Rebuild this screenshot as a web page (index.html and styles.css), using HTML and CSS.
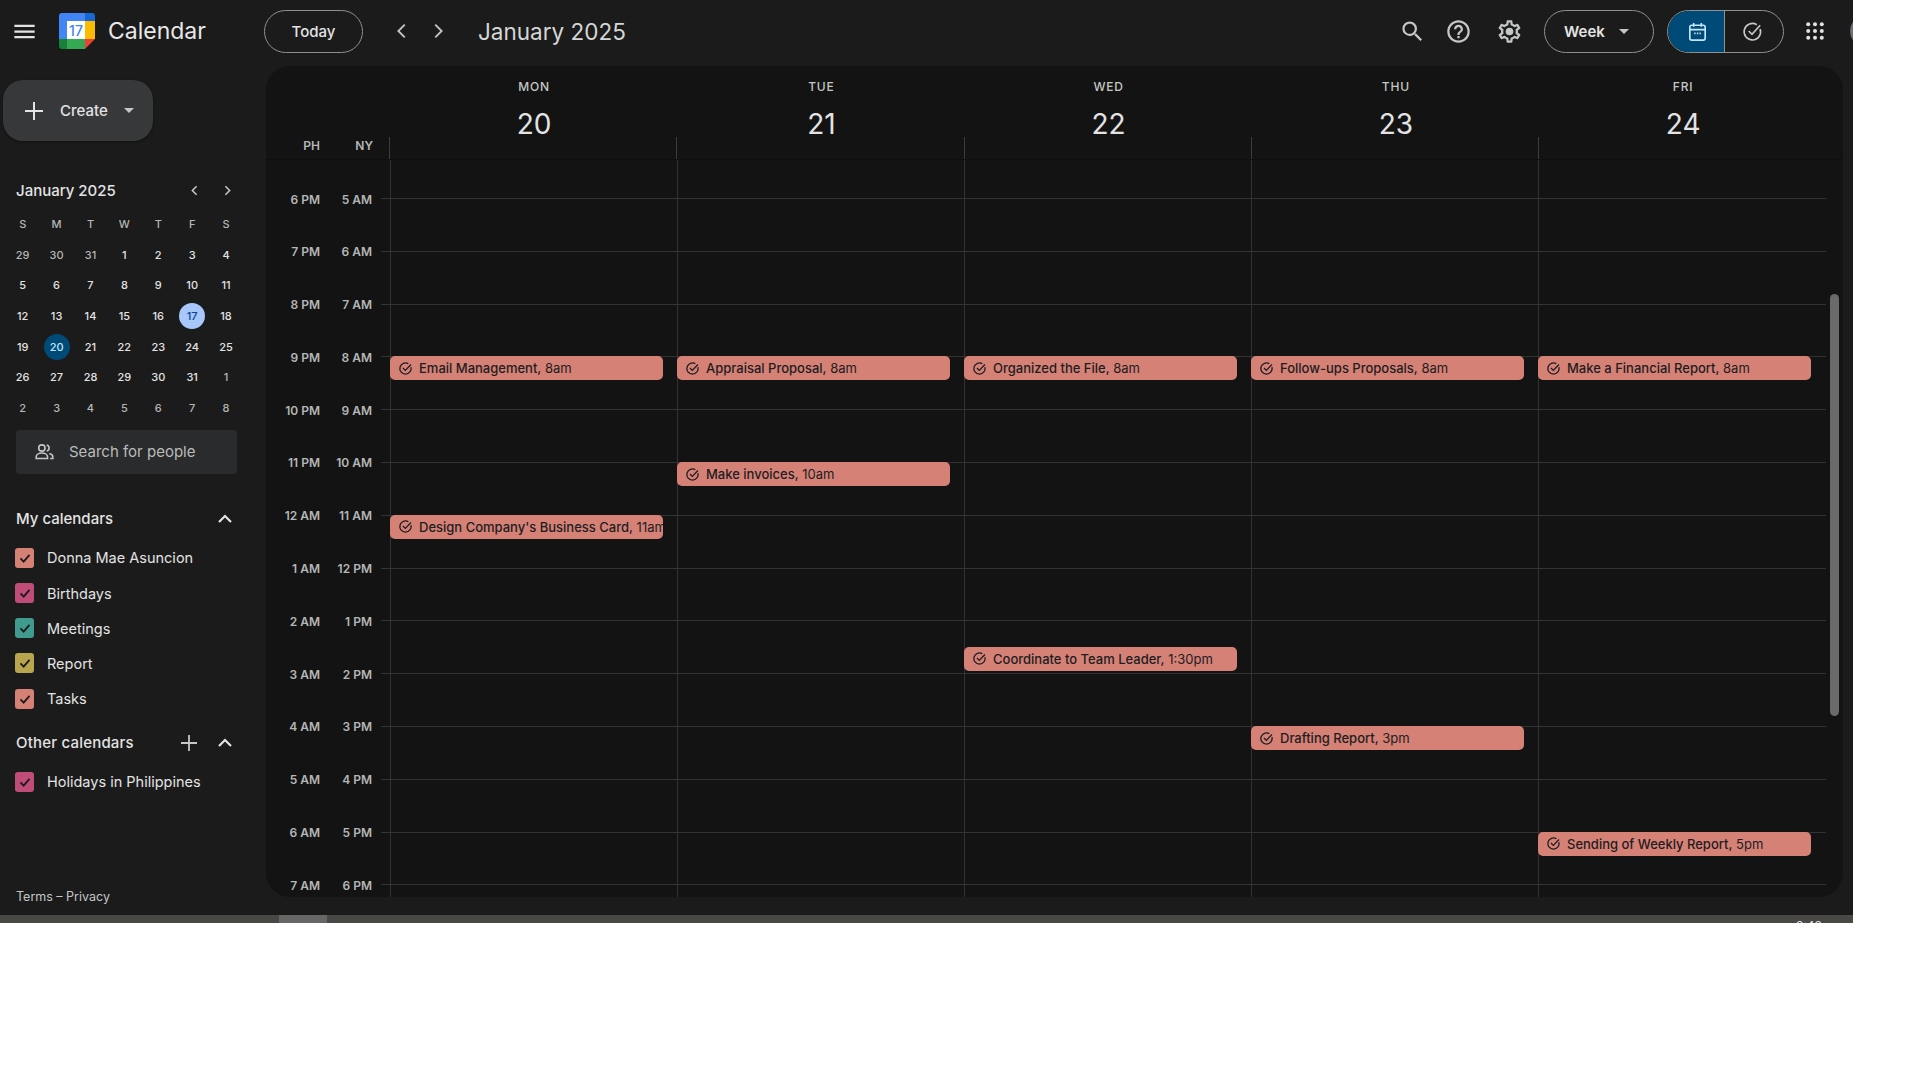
FILE: index.html
```html
<!DOCTYPE html>
<html lang="en">
<head>
    <meta charset="UTF-8">
    <title>Calendar - Week of January 20, 2025</title>
    <link rel="stylesheet" href="styles.css">
</head>
<body>
    <div class="app">
        <!-- Top bar -->
        <header class="topbar">
            <div class="brand">
                <svg class="icon-menu" viewBox="0 0 24 24"><path d="M3 18h18v-2H3v2zm0-5h18v-2H3v2zm0-7v2h18V6H3z"/></svg>
                <svg class="logo" viewBox="0 0 36 36">
                    <path fill="#4285f4" d="M3 0h23v8H8v18H0V3a3 3 0 0 1 3-3z"/>
                    <path fill="#1967d2" d="M26 0h7a3 3 0 0 1 3 3v5H26z"/>
                    <path fill="#fbbc04" d="M26 8h10v18H26z"/>
                    <path fill="#34a853" d="M8 26h18v10H8z"/>
                    <path fill="#188038" d="M0 26h8v10H3a3 3 0 0 1-3-3z"/>
                    <path fill="#ea4335" d="M26 26h10L26 36z"/>
                    <path fill="#fff" d="M8 8h18v18H8z"/>
                    <text class="logo-day" x="17" y="23">17</text>
                </svg>
                <span class="brand-name">Calendar</span>
            </div>
            <button class="pill today-btn">Today</button>
            <div class="period-nav">
                <svg class="chevron" viewBox="0 0 24 24"><polyline points="15,5 8,12 15,19"/></svg>
                <svg class="chevron" viewBox="0 0 24 24"><polyline points="9,5 16,12 9,19"/></svg>
            </div>
            <div class="period-title">January 2025</div>
            <div class="top-actions">
                <div class="top-icon">
                    <svg viewBox="0 0 24 24"><path d="M15.5 14h-.79l-.28-.27A6.47 6.47 0 0 0 16 9.5 6.5 6.5 0 1 0 9.5 16c1.61 0 3.09-.59 4.23-1.57l.27.28v.79l5 4.99L20.49 19l-4.99-5zm-6 0C7.01 14 5 11.99 5 9.5S7.01 5 9.5 5 14 7.01 14 9.5 11.99 14 9.5 14z"/></svg>
                </div>
                <div class="top-icon">
                    <svg viewBox="0 0 24 24"><path d="M11 18h2v-2h-2v2zm1-16C6.48 2 2 6.48 2 12s4.48 10 10 10 10-4.48 10-10S17.52 2 12 2zm0 18c-4.41 0-8-3.59-8-8s3.59-8 8-8 8 3.59 8 8-3.59 8-8 8zm0-14c-2.21 0-4 1.79-4 4h2c0-1.1.9-2 2-2s2 .9 2 2c0 2-3 1.75-3 5h2c0-2.25 3-2.5 3-5 0-2.21-1.79-4-4-4z"/></svg>
                </div>
                <div class="top-icon gear">
                    <svg viewBox="0 0 24 24"><path d="M19.43 12.98c.04-.32.07-.64.07-.98 0-.34-.03-.66-.07-.98l2.11-1.65c.19-.15.24-.42.12-.64l-2-3.46c-.09-.16-.26-.25-.44-.25-.06 0-.12.01-.17.03l-2.49 1c-.52-.4-1.08-.73-1.69-.98l-.38-2.65C14.46 2.18 14.25 2 14 2h-4c-.25 0-.46.18-.49.42l-.38 2.65c-.61.25-1.17.59-1.69.98l-2.49-1c-.06-.02-.12-.03-.18-.03-.17 0-.34.09-.43.25l-2 3.46c-.13.22-.07.49.12.64l2.11 1.65c-.04.32-.07.65-.07.98 0 .33.03.66.07.98l-2.11 1.65c-.19.15-.24.42-.12.64l2 3.46c.09.16.26.25.44.25.06 0 .12-.01.17-.03l2.49-1c.52.4 1.08.73 1.69.98l.38 2.65c.03.24.24.42.49.42h4c.25 0 .46-.18.49-.42l.38-2.65c.61-.25 1.17-.59 1.69-.98l2.49 1c.06.02.12.03.18.03.17 0 .34-.09.43-.25l2-3.46c.12-.22.07-.49-.12-.64l-2.11-1.65zm-1.98-1.71c.04.31.05.52.05.73 0 .21-.02.43-.05.73l-.14 1.13.89.7 1.08.84-.7 1.21-1.27-.51-1.04-.42-.9.68c-.43.32-.84.56-1.25.73l-1.06.43-.16 1.13-.2 1.35h-1.4l-.19-1.35-.16-1.13-1.06-.43c-.43-.18-.83-.41-1.23-.71l-.91-.7-1.06.43-1.27.51-.7-1.21 1.08-.84.89-.7-.14-1.13c-.03-.31-.05-.54-.05-.74s.02-.43.05-.73l.14-1.13-.89-.7-1.08-.84.7-1.21 1.27.51 1.04.42.9-.68c.43-.32.84-.56 1.25-.73l1.06-.43.16-1.13.2-1.35h1.39l.19 1.35.16 1.13 1.06.43c.43.18.83.41 1.23.71l.91.7 1.06-.43 1.27-.51.7 1.21-1.07.85-.89.7.14 1.13z"/><circle cx="12" cy="12" r="3.4"/></svg>
                </div>
                <button class="pill week-btn">Week <span class="caret"></span></button>
                <div class="view-toggle">
                    <div class="view-opt active">
                        <svg viewBox="0 0 24 24"><rect x="4" y="5.5" width="16" height="15.5" rx="2"/><path d="M4 10h16M8 3v4M16 3v4"/><path d="M8.5 14h1.5M11.3 14h1.5M14 14h1.500"/></svg>
                    </div>
                    <div class="view-opt">
                        <svg viewBox="0 0 24 24"><path d="M20 9.5A8.6 8.6 0 1 1 16.5 5"/><path d="M8 11.5l3.5 3.5L20 5.5"/></svg>
                    </div>
                </div>
                <svg class="apps-icon" viewBox="0 0 18 18">
                    <circle cx="2.2" cy="2.2" r="2"/><circle cx="9" cy="2.2" r="2"/><circle cx="15.8" cy="2.2" r="2"/>
                    <circle cx="2.2" cy="9" r="2"/><circle cx="9" cy="9" r="2"/><circle cx="15.8" cy="9" r="2"/>
                    <circle cx="2.2" cy="15.8" r="2"/><circle cx="9" cy="15.8" r="2"/><circle cx="15.8" cy="15.8" r="2"/>
                </svg>
                <div class="avatar"></div>
            </div>
        </header>

        <div class="main">
            <!-- Left side -->
            <aside class="sidebar">
                <button class="create-btn">
                    <svg viewBox="0 0 20 20"><path d="M10 1v18M1 10h18"/></svg>
                    <span>Create</span>
                    <span class="caret"></span>
                </button>

                <div class="side-section">
                    <div class="mini-head">
                        <span class="mini-title">January 2025</span>
                        <svg class="mini-arrow" viewBox="0 0 24 24"><polyline points="15,6 9,12 15,18"/></svg>
                        <svg class="mini-arrow" viewBox="0 0 24 24"><polyline points="9,6 15,12 9,18"/></svg>
                    </div>
                    <div class="mini-cal">
                        <span class="wd">S</span><span class="wd">M</span><span class="wd">T</span><span class="wd">W</span><span class="wd">T</span><span class="wd">F</span><span class="wd">S</span>
                        <span class="other">29</span><span class="other">30</span><span class="other">31</span><span>1</span><span>2</span><span>3</span><span>4</span>
                        <span>5</span><span>6</span><span>7</span><span>8</span><span>9</span><span>10</span><span>11</span>
                        <span>12</span><span>13</span><span>14</span><span>15</span><span>16</span><span><b class="today">17</b></span><span>18</span>
                        <span>19</span><span><b class="picked">20</b></span><span>21</span><span>22</span><span>23</span><span>24</span><span>25</span>
                        <span>26</span><span>27</span><span>28</span><span>29</span><span>30</span><span>31</span><span class="other">1</span>
                        <span class="other">2</span><span class="other">3</span><span class="other">4</span><span class="other">5</span><span class="other">6</span><span class="other">7</span><span class="other">8</span>
                    </div>

                    <div class="people-search">
                        <svg viewBox="0 0 24 24"><circle cx="9" cy="8" r="3.6"/><path d="M2.5 20v-2c0-2.6 3-4.2 6.5-4.2s6.5 1.6 6.5 4.2v2z"/><path d="M14.5 4.5a3.6 3.6 0 0 1 0 7M17.5 14.2c2.2.6 4 2 4 3.8v2h-3"/></svg>
                        <span>Search for people</span>
                    </div>

                    <div class="cal-head first">
                        <span>My calendars</span>
                        <svg class="head-icon" viewBox="0 0 24 24"><polyline points="6,15 12,9 18,15"/></svg>
                    </div>
                    <label class="cal-item"><span class="box salmon"><svg viewBox="0 0 20 20"><polyline points="5,10.5 8.5,14 15,6.5"/></svg></span>Donna Mae Asuncion</label>
                    <label class="cal-item"><span class="box berry"><svg viewBox="0 0 20 20"><polyline points="5,10.5 8.5,14 15,6.5"/></svg></span>Birthdays</label>
                    <label class="cal-item"><span class="box teal"><svg viewBox="0 0 20 20"><polyline points="5,10.5 8.5,14 15,6.5"/></svg></span>Meetings</label>
                    <label class="cal-item"><span class="box mustard"><svg viewBox="0 0 20 20"><polyline points="5,10.5 8.5,14 15,6.5"/></svg></span>Report</label>
                    <label class="cal-item"><span class="box salmon"><svg viewBox="0 0 20 20"><polyline points="5,10.5 8.5,14 15,6.5"/></svg></span>Tasks</label>

                    <div class="cal-head second">
                        <span>Other calendars</span>
                        <svg class="head-icon plus" viewBox="0 0 24 24"><path d="M12 4v16M4 12h16"/></svg>
                        <svg class="head-icon" viewBox="0 0 24 24"><polyline points="6,15 12,9 18,15"/></svg>
                    </div>
                    <label class="cal-item"><span class="box berry"><svg viewBox="0 0 20 20"><polyline points="5,10.5 8.5,14 15,6.5"/></svg></span>Holidays in Philippines</label>
                </div>

                <div class="terms">Terms – Privacy</div>
            </aside>

            <!-- Week grid -->
            <section class="panel">
                <div class="week-head">
                    <div class="zones"><span>PH</span><span>NY</span></div>
                    <div class="head-day"><span class="dow">MON</span><span class="dom">20</span></div>
                    <div class="head-day"><span class="dow">TUE</span><span class="dom">21</span></div>
                    <div class="head-day"><span class="dow">WED</span><span class="dom">22</span></div>
                    <div class="head-day"><span class="dow">THU</span><span class="dom">23</span></div>
                    <div class="head-day"><span class="dow">FRI</span><span class="dom">24</span></div>
                </div>
                <div class="week-body">
                    <div class="hour-row"><span class="t">6 PM</span><span class="t">5 AM</span><i></i></div>
                    <div class="hour-row"><span class="t">7 PM</span><span class="t">6 AM</span><i></i></div>
                    <div class="hour-row"><span class="t">8 PM</span><span class="t">7 AM</span><i></i></div>
                    <div class="hour-row"><span class="t">9 PM</span><span class="t">8 AM</span><i></i></div>
                    <div class="hour-row"><span class="t">10 PM</span><span class="t">9 AM</span><i></i></div>
                    <div class="hour-row"><span class="t">11 PM</span><span class="t">10 AM</span><i></i></div>
                    <div class="hour-row"><span class="t">12 AM</span><span class="t">11 AM</span><i></i></div>
                    <div class="hour-row"><span class="t">1 AM</span><span class="t">12 PM</span><i></i></div>
                    <div class="hour-row"><span class="t">2 AM</span><span class="t">1 PM</span><i></i></div>
                    <div class="hour-row"><span class="t">3 AM</span><span class="t">2 PM</span><i></i></div>
                    <div class="hour-row"><span class="t">4 AM</span><span class="t">3 PM</span><i></i></div>
                    <div class="hour-row"><span class="t">5 AM</span><span class="t">4 PM</span><i></i></div>
                    <div class="hour-row"><span class="t">6 AM</span><span class="t">5 PM</span><i></i></div>
                    <div class="hour-row"><span class="t">7 AM</span><span class="t">6 PM</span><i></i></div>

                    <div class="days">
                        <div class="day">
                            <div class="event" style="--h:3"><svg viewBox="0 0 16 16"><path d="M13.8 6.5A6 6 0 1 1 11 2.8"/><path d="M5.3 7.5l2.5 2.5 6-6.3"/></svg><span><b>Email Management,</b> 8am</span></div>
                            <div class="event" style="--h:6"><svg viewBox="0 0 16 16"><path d="M13.8 6.5A6 6 0 1 1 11 2.8"/><path d="M5.3 7.5l2.5 2.5 6-6.3"/></svg><span><b>Design Company's Business Card,</b> 11am</span></div>
                        </div>
                        <div class="day">
                            <div class="event" style="--h:3"><svg viewBox="0 0 16 16"><path d="M13.8 6.5A6 6 0 1 1 11 2.8"/><path d="M5.3 7.5l2.5 2.5 6-6.3"/></svg><span><b>Appraisal Proposal,</b> 8am</span></div>
                            <div class="event" style="--h:5"><svg viewBox="0 0 16 16"><path d="M13.8 6.5A6 6 0 1 1 11 2.8"/><path d="M5.3 7.5l2.5 2.5 6-6.3"/></svg><span><b>Make invoices,</b> 10am</span></div>
                        </div>
                        <div class="day">
                            <div class="event" style="--h:3"><svg viewBox="0 0 16 16"><path d="M13.8 6.5A6 6 0 1 1 11 2.8"/><path d="M5.3 7.5l2.5 2.5 6-6.3"/></svg><span><b>Organized the File,</b> 8am</span></div>
                            <div class="event" style="--h:8.5"><svg viewBox="0 0 16 16"><path d="M13.8 6.5A6 6 0 1 1 11 2.8"/><path d="M5.3 7.5l2.5 2.5 6-6.3"/></svg><span><b>Coordinate to Team Leader,</b> 1:30pm</span></div>
                        </div>
                        <div class="day">
                            <div class="event" style="--h:3"><svg viewBox="0 0 16 16"><path d="M13.8 6.5A6 6 0 1 1 11 2.8"/><path d="M5.3 7.5l2.5 2.5 6-6.3"/></svg><span><b>Follow-ups Proposals,</b> 8am</span></div>
                            <div class="event" style="--h:10"><svg viewBox="0 0 16 16"><path d="M13.8 6.5A6 6 0 1 1 11 2.8"/><path d="M5.3 7.5l2.5 2.5 6-6.3"/></svg><span><b>Drafting Report,</b> 3pm</span></div>
                        </div>
                        <div class="day">
                            <div class="event" style="--h:3"><svg viewBox="0 0 16 16"><path d="M13.8 6.5A6 6 0 1 1 11 2.8"/><path d="M5.3 7.5l2.5 2.5 6-6.3"/></svg><span><b>Make a Financial Report,</b> 8am</span></div>
                            <div class="event" style="--h:12"><svg viewBox="0 0 16 16"><path d="M13.8 6.5A6 6 0 1 1 11 2.8"/><path d="M5.3 7.5l2.5 2.5 6-6.3"/></svg><span><b>Sending of Weekly Report,</b> 5pm</span></div>
                        </div>
                    </div>
                    <div class="scroll-thumb"></div>
                </div>
            </section>
        </div>

        <!-- Window scrollbar, cut off by the capture -->
        <div class="bottom-bar">
            <div class="bottom-thumb"></div>
            <span class="clock">3:43</span>
        </div>
    </div>
</body>
</html>
```

FILE: styles.css
```css
* {
    box-sizing: border-box;
}
body {
    margin: 0;
    background-color: #fff;
    font-family: Inter, "Noto Sans", sans-serif;
    color: #e3e3e3;
}
button {
    font-family: inherit;
    cursor: pointer;
}
svg {
    display: block;
    flex-shrink: 0;
}
.app {
    width: 1853px;
    height: 923px;
    background-color: #1b1b1b;
    overflow: hidden;
    display: flex;
    flex-direction: column;
}

/* Top bar */
.topbar {
    height: 66px;
    flex-shrink: 0;
    display: flex;
    align-items: center;
    padding: 0 0 4px 11px;
}
.brand {
    width: 253px;
    display: flex;
    align-items: center;
}
.icon-menu {
    width: 27px;
    height: 27px;
    fill: #e3e3e3;
}
.logo {
    width: 36px;
    height: 36px;
    margin-left: 21px;
}
.logo-day {
    font-size: 14px;
    font-weight: 500;
    fill: #4285f4;
    text-anchor: middle;
}
.brand-name {
    margin-left: 13px;
    font-size: 23px;
    color: #e8e8e8;
}
.pill {
    height: 43px;
    background: none;
    border: 1px solid #8e918f;
    border-radius: 22px;
    color: #e3e3e3;
    font-size: 15px;
    font-weight: 500;
}
.today-btn {
    width: 99px;
}
.period-nav {
    display: flex;
    margin-left: 21px;
}
.chevron {
    width: 36px;
    height: 22px;
    fill: none;
    stroke: #c4c7c5;
    stroke-width: 2;
}
.period-title {
    margin-left: 22px;
    flex: 1;
    font-size: 22.5px;
    color: #d5d7d6;
}
.top-actions {
    display: flex;
    align-items: center;
    margin-right: -29px;
}
.top-icon {
    width: 46px;
    display: flex;
    justify-content: center;
}
.top-icon svg {
    width: 27px;
    height: 27px;
    fill: #c4c7c5;
}
.gear {
    margin-left: 5px;
}
.week-btn {
    width: 110px;
    margin-left: 12px;
    display: flex;
    align-items: center;
    padding-left: 19px;
    gap: 14px;
    font-weight: 600;
}
.caret {
    display: inline-block;
    border-left: 5px solid transparent;
    border-right: 5px solid transparent;
    border-top: 5px solid #c4c7c5;
}
.view-toggle {
    width: 117px;
    height: 43px;
    margin-left: 13px;
    display: flex;
    border: 1px solid #8e918f;
    border-radius: 22px;
    overflow: hidden;
}
.view-opt {
    flex: 1;
    display: flex;
    align-items: center;
    justify-content: center;
    padding-right: 4px;
}
.view-opt + .view-opt {
    border-left: 1px solid #8e918f;
}
.view-opt svg {
    width: 23px;
    height: 23px;
    fill: none;
    stroke: #c4c7c5;
    stroke-width: 1.7;
}
.view-opt.active {
    background-color: #004a77;
    padding: 0 0 0 2px;
}
.view-opt.active svg {
    stroke: #c2e7ff;
}
.apps-icon {
    width: 18px;
    height: 18px;
    margin-left: 22px;
    fill: #e3e3e3;
}
.avatar {
    width: 32px;
    height: 32px;
    margin-left: 26px;
    flex-shrink: 0;
    border-radius: 50%;
    background-color: #6b7078;
}

/* Main row */
.main {
    flex: 1;
    display: flex;
    min-height: 0;
}
.sidebar {
    width: 266px;
    flex-shrink: 0;
    display: flex;
    flex-direction: column;
}
.create-btn {
    width: 150px;
    height: 61px;
    margin: 14px 0 0 3px;
    padding: 0 0 0 21px;
    display: flex;
    align-items: center;
    background-color: #37383a;
    border: none;
    border-radius: 20px;
    box-shadow: 0 1px 3px rgba(0, 0, 0, 0.4);
    color: #e3e3e3;
    font-size: 15px;
    font-weight: 500;
}
.create-btn svg {
    width: 20px;
    height: 20px;
    fill: none;
    stroke: #e3e3e3;
    stroke-width: 2;
}
.create-btn span:nth-child(2) {
    margin-left: 16px;
}
.create-btn .caret {
    margin-left: 16px;
}
.side-section {
    padding: 0 29px 0 16px;
}

/* Mini month */
.mini-head {
    height: 24px;
    margin: 37px -6.5px 0 0;
    display: flex;
    align-items: center;
}
.mini-title {
    flex: 1;
    font-size: 15px;
    font-weight: 500;
    color: #e3e3e3;
}
.mini-arrow {
    width: 33px;
    height: 17px;
    fill: none;
    stroke: #c4c7c5;
    stroke-width: 2.2;
}
.mini-cal {
    display: grid;
    grid-template-columns: repeat(7, 33.9px);
    grid-auto-rows: 30.7px;
    margin: 6.5px 0 0 -10.25px;
    font-size: 11px;
    font-weight: 500;
    color: #e3e3e3;
}
.mini-cal span {
    display: flex;
    align-items: center;
    justify-content: center;
}
.mini-cal .wd,
.mini-cal .other {
    color: #b4b7b5;
    font-weight: 500;
}
.mini-cal b {
    width: 26px;
    height: 26px;
    display: flex;
    align-items: center;
    justify-content: center;
    border-radius: 50%;
    font-weight: 500;
}
.mini-cal .today {
    background-color: #a8c7fa;
    color: #0842a0;
}
.mini-cal .picked {
    background-color: #004a77;
    color: #c2e7ff;
}

.people-search {
    height: 44px;
    margin-top: 6.6px;
    display: flex;
    align-items: center;
    gap: 14px;
    padding-left: 18px;
    background-color: #2a2b2d;
    border-radius: 4px;
    font-size: 15px;
    color: #b9bcba;
}
.people-search svg {
    width: 21px;
    height: 21px;
    fill: none;
    stroke: #c4c7c5;
    stroke-width: 1.8;
}

/* Calendar lists */
.cal-head {
    height: 24px;
    display: flex;
    align-items: center;
    gap: 12px;
    font-size: 15px;
    font-weight: 500;
    color: #e3e3e3;
}
.cal-head span {
    flex: 1;
}
.cal-head.first {
    margin: 33px 0 9.4px;
}
.cal-head.second {
    margin: 14.6px 0 9.4px;
    letter-spacing: 0.2px;
}
.head-icon {
    width: 24px;
    height: 24px;
    fill: none;
    stroke: #e3e3e3;
    stroke-width: 2.2;
}
.head-icon.plus {
    stroke: #c4c7c5;
    stroke-width: 1.8;
}
.cal-item {
    height: 35.2px;
    display: flex;
    align-items: center;
    gap: 13px;
    margin-left: -1px;
    font-size: 14.5px;
    color: #e3e3e3;
}
.box {
    width: 19px;
    height: 20px;
    border-radius: 3px;
    display: flex;
    align-items: center;
    justify-content: center;
}
.box svg {
    width: 18px;
    height: 18px;
    fill: none;
    stroke: #1b1b1b;
    stroke-width: 2;
}
.salmon {
    background-color: #d58176;
}
.berry {
    background-color: #c04d78;
}
.teal {
    background-color: #409a8d;
}
.mustard {
    background-color: #b9a54d;
}
.terms {
    margin-top: auto;
    padding: 0 0 10px 16px;
    font-size: 12.5px;
    line-height: 16px;
    color: #c4c7c5;
}

/* Week panel */
.panel {
    width: 1577px;
    height: 831px;
    background-color: #131313;
    border-radius: 24px;
    overflow: hidden;
    display: flex;
    flex-direction: column;
}
.week-head {
    height: 94px;
    flex-shrink: 0;
    display: flex;
    padding-left: 123px;
    border-bottom: 1px solid #0f0f0f;
}
.zones {
    width: 123px;
    margin-left: -123px;
    display: flex;
    align-self: flex-end;
    height: 21px;
    font-size: 12px;
    font-weight: 600;
    line-height: 16px;
    color: #b4b7b5;
}
.zones span:first-child {
    width: 54px;
    text-align: right;
}
.zones span:last-child {
    width: 53px;
    text-align: right;
}
.head-day {
    width: 287.25px;
    position: relative;
    display: flex;
    flex-direction: column;
    align-items: center;
    padding: 13px 0 0 3px;
}
.head-day::before {
    content: "";
    position: absolute;
    left: 0;
    bottom: 0;
    height: 22px;
    border-left: 1px solid #3c3c3c;
}
.dow {
    font-size: 12px;
    font-weight: 500;
    line-height: 16px;
    letter-spacing: 0.8px;
    color: #c4c7c5;
}
.dom {
    margin-top: 8px;
    font-size: 28px;
    line-height: 42px;
    color: #e3e3e3;
}
.week-body {
    flex: 1;
    min-height: 0;
    position: relative;
    padding-top: 38px;
    overflow: hidden;
}
.hour-row {
    height: 52.8px;
    display: flex;
    padding-right: 17px;
}
.t {
    width: 54px;
    height: 16px;
    margin-top: -6.5px;
    flex-shrink: 0;
    text-align: right;
    font-size: 12px;
    font-weight: 600;
    line-height: 16px;
    white-space: nowrap;
    color: #b4b7b5;
}
.t + .t {
    width: 52px;
}
.hour-row i {
    flex: 1;
    margin-left: 9px;
    border-top: 1px solid #333;
}
.days {
    position: absolute;
    left: 124px;
    top: 0;
    bottom: 0;
    display: flex;
}
.day {
    width: 287px;
    position: relative;
    border-left: 1px solid #333;
}
.event {
    position: absolute;
    left: -1px;
    top: calc(38px + var(--h) * 52.8px);
    width: 273px;
    height: 24px;
    display: flex;
    align-items: center;
    gap: 6px;
    padding-left: 8px;
    background-color: #d58176;
    border-radius: 5px;
    overflow: hidden;
    white-space: nowrap;
    font-size: 13px;
    color: #1d1d22;
}
.event svg {
    width: 15px;
    height: 15px;
    fill: none;
    stroke: #1d1d22;
    stroke-width: 1.4;
}
.event b {
    font-weight: 500;
}
.scroll-thumb {
    position: absolute;
    left: 1564px;
    top: 134px;
    width: 9px;
    height: 422px;
    border-radius: 5px;
    background-color: #6a6a6a;
}

/* Bottom strip */
.bottom-bar {
    height: 8px;
    flex-shrink: 0;
    background-color: #4a4845;
    display: flex;
    overflow: hidden;
}
.bottom-thumb {
    width: 48px;
    margin-left: 279px;
    background-color: #666;
}
.clock {
    margin-left: 1469px;
    padding-top: 3px;
    font-size: 12px;
    line-height: 16px;
    color: #e3e3e3;
}
```
